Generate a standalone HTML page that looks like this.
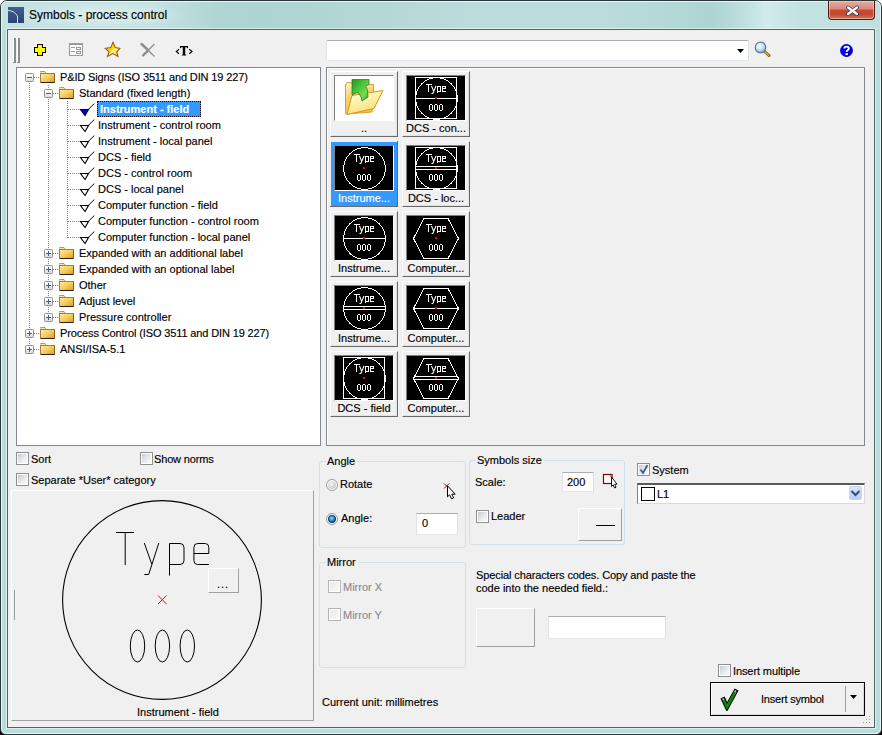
<!DOCTYPE html>
<html><head><meta charset="utf-8">
<style>
*{box-sizing:border-box}
html,body{margin:0;padding:0;width:882px;height:735px;overflow:hidden;background:#fff}
body{font-family:"Liberation Sans",sans-serif;font-size:11px;color:#000;position:relative}
.a{position:absolute}
.t{position:absolute;white-space:nowrap;line-height:13px;font-size:11px;color:#000;padding-top:1px;-webkit-text-stroke:0.15px currentColor}
#frame{left:0;top:0;width:882px;height:735px;border:1px solid #283838;border-radius:7px 7px 6px 6px;background:linear-gradient(180deg,rgba(0,0,0,0) 0,rgba(0,0,0,0) 29px,#b8dcdb 29px),linear-gradient(90deg,#c4e2e2 0px,#c6e3e3 150px,#b0d6d4 215px,#acd4d2 260px,#b4d8d6 380px,#bcdcdc 480px,#badcdc 600px,#b2d8d6 680px,#acd4d2 710px,#c0e0e0 745px,#d2eaea 765px,#c2e2e2 800px,#c0e0e0 882px)}
#frame2{left:1px;top:1px;width:880px;height:733px;border:1px solid rgba(255,255,255,.7);border-radius:6px 6px 5px 5px}
#client{left:7px;top:29px;width:868px;height:699px;border:1px solid #4e6466;background:#f0f0f0;box-shadow:0 0 0 1px rgba(255,255,255,.55)}
.panel{border:1px solid #828790}
.cb{position:absolute;width:13px;height:13px;border:1px solid #8e8f8f;background:linear-gradient(135deg,#c8ccd3 10%,#eceef0 60%,#fafafa);box-shadow:inset 0 0 0 1px #fff}
.gb{position:absolute;border:1px solid #d5dfe5;border-radius:3px}
.gbl{position:absolute;background:#f0f0f0;padding:1px 2px 0 1px;line-height:13px;-webkit-text-stroke:0.15px #000}
.inp{position:absolute;background:#fff;border:1px solid #abadb3;border-top-color:#abadb3;border-left-color:#e2e3ea;border-right-color:#dbdfe6;border-bottom-color:#e3e9ef}
</style></head><body>
<div class="a" style="left:0;top:725px;width:882px;height:10px;background:#000"></div>
<div id="frame" class="a"></div>
<div id="frame2" class="a"></div>
<div class="a" style="left:14px;top:2px;width:175px;height:26px;background:radial-gradient(ellipse 50% 50% at 50% 50%,rgba(255,255,255,0.45),rgba(255,255,255,0) 100%)"></div>
<!-- title icon -->
<div class="a" style="left:8px;top:7px;width:16px;height:16px;background:linear-gradient(180deg,#3f5f90,#2a4575)"></div>
<svg class="a" style="left:8px;top:7px" width="16" height="16"><path d="M0 3.5 Q6 3.5 9.5 9 L9.5 16" stroke="#d8dde8" stroke-width="1" fill="none"/></svg>
<div class="t" style="left:29px;top:7px;font-size:12px;line-height:14px;color:#000">Symbols - process control</div>
<!-- close button -->
<div class="a" style="left:828px;top:1px;width:47px;height:19px;border:1px solid #5a1a10;border-top:none;border-radius:0 0 4px 4px;background:linear-gradient(180deg,#e8a89c 0%,#d98a7c 45%,#c74a30 50%,#c24a32 75%,#d2775e 100%);box-shadow:inset 0 0 0 1px rgba(255,220,210,.5)"></div>
<svg class="a" style="left:845px;top:4px" width="15" height="13"><path d="M3 3.5 L12 10 M12 3.5 L3 10" stroke="#3a3a58" stroke-width="4" stroke-linecap="round"/><path d="M3 3.5 L12 10 M12 3.5 L3 10" stroke="#fff" stroke-width="2.2" stroke-linecap="round"/></svg>

<div id="client" class="a"></div>

<!-- toolbar -->
<svg class="a" style="left:13px;top:38px" width="8" height="26" shape-rendering="crispEdges"><rect x="0" y="0" width="1" height="25" fill="#fff"/><rect x="1" y="0" width="2" height="25" fill="#8a8a8a"/><rect x="0" y="24" width="3" height="1" fill="#8a8a8a"/><rect x="4" y="0" width="1" height="25" fill="#fff"/><rect x="5" y="0" width="2" height="25" fill="#8a8a8a"/><rect x="4" y="24" width="3" height="1" fill="#8a8a8a"/></svg>

<!-- yellow cross -->
<svg class="a" style="left:33px;top:43px" width="14" height="14" shape-rendering="crispEdges"><path d="M3 0 H10 V3 H13 V10 H10 V13 H3 V10 H0 V3 H3 Z" fill="#fff" opacity="0.8"/><rect x="4" y="1" width="6" height="12" fill="#000"/><rect x="1" y="4" width="12" height="6" fill="#000"/><rect x="5" y="2" width="4" height="10" fill="#ff0"/><rect x="2" y="5" width="10" height="4" fill="#ff0"/></svg>
<!-- properties icon -->
<svg class="a" style="left:69px;top:43px" width="14" height="13" shape-rendering="crispEdges"><rect x="0" y="0" width="14" height="13" fill="#9a9a9a"/><rect x="1" y="2" width="12" height="10" fill="#fbfbfb"/><rect x="2" y="4" width="4" height="1" fill="#9a9a9a"/><rect x="2" y="8" width="4" height="1" fill="#9a9a9a"/><rect x="7" y="4" width="5" height="3" fill="#9a9a9a"/><rect x="8" y="5" width="3" height="1" fill="#fbfbfb"/><rect x="7" y="8" width="5" height="3" fill="#9a9a9a"/><rect x="8" y="9" width="3" height="1" fill="#fbfbfb"/></svg>
<!-- star -->
<svg class="a" style="left:104px;top:41px" width="17" height="17"><defs><linearGradient id="sg" x1="0" y1="0" x2="1" y2="1"><stop offset="0" stop-color="#ffe060"/><stop offset="0.45" stop-color="#ffd000"/><stop offset="0.6" stop-color="#fff0a0"/><stop offset="1" stop-color="#f0b000"/></linearGradient></defs><path d="M9 1.3 L11.3 6.6 L16 7.4 L12.8 10.9 L14 15.4 L8.7 12.6 L3.6 15.4 L5 10.9 L1.2 7.4 L6.7 6.6 Z" fill="url(#sg)" stroke="#9a6000" stroke-width="1.1" stroke-linejoin="miter"/></svg>
<!-- X gray -->
<svg class="a" style="left:139px;top:42px" width="18" height="16"><path d="M2.5 2 L15.5 14.5" stroke="#8c8c8c" stroke-width="1.2"/><path d="M2.5 2 L8 7" stroke="#8c8c8c" stroke-width="2.4" stroke-linecap="round"/><path d="M15.5 2 L4 13.5" stroke="#8c8c8c" stroke-width="1.2"/><path d="M9 8.5 L4 13.5" stroke="#8c8c8c" stroke-width="2.4" stroke-linecap="round"/></svg>
<!-- <T> -->
<svg class="a" style="left:174px;top:44px" width="22" height="13"><path d="M5 5.3 L2.3 7.5 L5 9.7 M15.3 5.3 L18 7.5 L15.3 9.7" fill="none" stroke="#000" stroke-width="1.1"/><path d="M6 2 H14 V4.3 H13.2 L12.8 3.3 H11.2 V10.6 L12.2 10.8 V11.4 H7.8 V10.8 L8.8 10.6 V3.3 H7.2 L6.8 4.3 H6 Z" fill="#000"/></svg>
<!-- search combo -->
<div class="a" style="left:326px;top:40px;width:423px;height:21px;background:#fff;border:1px solid #abadb3;border-left-color:#e2e3ea;border-right-color:#dbdfe6;border-bottom-color:#e3e9ef;border-radius:2px"></div>
<svg class="a" style="left:737px;top:49px" width="8" height="5"><path d="M0 0 H7 L3.5 4 Z" fill="#000"/></svg>
<!-- magnifier -->
<svg class="a" style="left:754px;top:41px" width="17" height="16"><defs><radialGradient id="mg" cx="0.4" cy="0.35" r="0.7"><stop offset="0" stop-color="#ffffff"/><stop offset="0.6" stop-color="#bcd8ee"/><stop offset="1" stop-color="#6a98c0"/></radialGradient></defs><path d="M9.5 9.5 L15 14.5" stroke="#7a5a10" stroke-width="3" stroke-linecap="round"/><path d="M9.8 9.8 L14.6 14.2" stroke="#e0b040" stroke-width="1.4" stroke-linecap="round"/><circle cx="6.5" cy="6.5" r="5.3" fill="url(#mg)" stroke="#5d7f9c" stroke-width="1.2"/></svg>
<!-- help -->
<svg class="a" style="left:840px;top:44px" width="13" height="13"><defs><linearGradient id="hg" x1="0" y1="0" x2="1" y2="1"><stop offset="0.45" stop-color="#0000f4"/><stop offset="1" stop-color="#000090"/></linearGradient></defs><circle cx="6.5" cy="6.5" r="6.4" fill="url(#hg)"/><path d="M4.3 4.6 Q4.3 2.6 6.6 2.6 Q8.8 2.6 8.8 4.4 Q8.8 5.6 7.6 6.3 Q6.6 6.9 6.6 8" fill="none" stroke="#fff" stroke-width="1.9"/><rect x="5.5" y="9.2" width="2.4" height="1.9" fill="#fff"/></svg>
<!-- tree panel -->
<div class="a panel" style="left:16px;top:67px;width:305px;height:379px;background:#fff"></div>
<!-- grid panel -->
<div class="a panel" style="left:326px;top:67px;width:539px;height:379px;background:#f0f0f0;box-shadow:inset 1px 1px 0 #fff"></div>
<!--TREE-->
<svg class="a" style="left:17px;top:68px" width="303" height="377">
<defs>
<linearGradient id="bxg" x1="0" y1="0" x2="0" y2="1"><stop offset="0" stop-color="#ffffff"/><stop offset="0.5" stop-color="#f4f4f4"/><stop offset="1" stop-color="#d8d8d8"/></linearGradient>
<linearGradient id="fg" x1="0" y1="0" x2="1" y2="1"><stop offset="0" stop-color="#fff2b0"/><stop offset="0.55" stop-color="#f5c850"/><stop offset="1" stop-color="#d89a20"/></linearGradient>
<g id="fold"><path d="M0.5 1.5 L0.5 0.5 L5 0.5 L6.5 2.5 L6.5 2.5" fill="#f4e0a0" stroke="#b89860"/><rect x="0.5" y="2.5" width="14" height="9" fill="url(#fg)" stroke="#a08040"/><path d="M1 11.5 H15" stroke="#302010"/><path d="M14.5 3 V12" stroke="#806020"/></g>
<g id="chk0"><path d="M0.5 7.5 H8.5 L5 13.5 Z" fill="#fff" stroke="#000" stroke-width="1.1" stroke-linejoin="miter"/><path d="M8.2 7.6 L14.2 1.6" stroke="#000" stroke-width="1"/></g>
<g id="chk1"><path d="M0.5 7.5 H8.5 L5 13.5 Z" fill="#0000ff" stroke="#000" stroke-width="1.1" stroke-linejoin="miter"/><path d="M8.2 7.6 L14.2 1.6" stroke="#000" stroke-width="1"/></g>
</defs>
<g fill="#808080"><rect x="12" y="15" width="1" height="1"/><rect x="12" y="17" width="1" height="1"/><rect x="12" y="19" width="1" height="1"/><rect x="12" y="21" width="1" height="1"/><rect x="12" y="23" width="1" height="1"/><rect x="12" y="25" width="1" height="1"/><rect x="12" y="27" width="1" height="1"/><rect x="12" y="29" width="1" height="1"/><rect x="12" y="31" width="1" height="1"/><rect x="12" y="33" width="1" height="1"/><rect x="12" y="35" width="1" height="1"/><rect x="12" y="37" width="1" height="1"/><rect x="12" y="39" width="1" height="1"/><rect x="12" y="41" width="1" height="1"/><rect x="12" y="43" width="1" height="1"/><rect x="12" y="45" width="1" height="1"/><rect x="12" y="47" width="1" height="1"/><rect x="12" y="49" width="1" height="1"/><rect x="12" y="51" width="1" height="1"/><rect x="12" y="53" width="1" height="1"/><rect x="12" y="55" width="1" height="1"/><rect x="12" y="57" width="1" height="1"/><rect x="12" y="59" width="1" height="1"/><rect x="12" y="61" width="1" height="1"/><rect x="12" y="63" width="1" height="1"/><rect x="12" y="65" width="1" height="1"/><rect x="12" y="67" width="1" height="1"/><rect x="12" y="69" width="1" height="1"/><rect x="12" y="71" width="1" height="1"/><rect x="12" y="73" width="1" height="1"/><rect x="12" y="75" width="1" height="1"/><rect x="12" y="77" width="1" height="1"/><rect x="12" y="79" width="1" height="1"/><rect x="12" y="81" width="1" height="1"/><rect x="12" y="83" width="1" height="1"/><rect x="12" y="85" width="1" height="1"/><rect x="12" y="87" width="1" height="1"/><rect x="12" y="89" width="1" height="1"/><rect x="12" y="91" width="1" height="1"/><rect x="12" y="93" width="1" height="1"/><rect x="12" y="95" width="1" height="1"/><rect x="12" y="97" width="1" height="1"/><rect x="12" y="99" width="1" height="1"/><rect x="12" y="101" width="1" height="1"/><rect x="12" y="103" width="1" height="1"/><rect x="12" y="105" width="1" height="1"/><rect x="12" y="107" width="1" height="1"/><rect x="12" y="109" width="1" height="1"/><rect x="12" y="111" width="1" height="1"/><rect x="12" y="113" width="1" height="1"/><rect x="12" y="115" width="1" height="1"/><rect x="12" y="117" width="1" height="1"/><rect x="12" y="119" width="1" height="1"/><rect x="12" y="121" width="1" height="1"/><rect x="12" y="123" width="1" height="1"/><rect x="12" y="125" width="1" height="1"/><rect x="12" y="127" width="1" height="1"/><rect x="12" y="129" width="1" height="1"/><rect x="12" y="131" width="1" height="1"/><rect x="12" y="133" width="1" height="1"/><rect x="12" y="135" width="1" height="1"/><rect x="12" y="137" width="1" height="1"/><rect x="12" y="139" width="1" height="1"/><rect x="12" y="141" width="1" height="1"/><rect x="12" y="143" width="1" height="1"/><rect x="12" y="145" width="1" height="1"/><rect x="12" y="147" width="1" height="1"/><rect x="12" y="149" width="1" height="1"/><rect x="12" y="151" width="1" height="1"/><rect x="12" y="153" width="1" height="1"/><rect x="12" y="155" width="1" height="1"/><rect x="12" y="157" width="1" height="1"/><rect x="12" y="159" width="1" height="1"/><rect x="12" y="161" width="1" height="1"/><rect x="12" y="163" width="1" height="1"/><rect x="12" y="165" width="1" height="1"/><rect x="12" y="167" width="1" height="1"/><rect x="12" y="169" width="1" height="1"/><rect x="12" y="171" width="1" height="1"/><rect x="12" y="173" width="1" height="1"/><rect x="12" y="175" width="1" height="1"/><rect x="12" y="177" width="1" height="1"/><rect x="12" y="179" width="1" height="1"/><rect x="12" y="181" width="1" height="1"/><rect x="12" y="183" width="1" height="1"/><rect x="12" y="185" width="1" height="1"/><rect x="12" y="187" width="1" height="1"/><rect x="12" y="189" width="1" height="1"/><rect x="12" y="191" width="1" height="1"/><rect x="12" y="193" width="1" height="1"/><rect x="12" y="195" width="1" height="1"/><rect x="12" y="197" width="1" height="1"/><rect x="12" y="199" width="1" height="1"/><rect x="12" y="201" width="1" height="1"/><rect x="12" y="203" width="1" height="1"/><rect x="12" y="205" width="1" height="1"/><rect x="12" y="207" width="1" height="1"/><rect x="12" y="209" width="1" height="1"/><rect x="12" y="211" width="1" height="1"/><rect x="12" y="213" width="1" height="1"/><rect x="12" y="215" width="1" height="1"/><rect x="12" y="217" width="1" height="1"/><rect x="12" y="219" width="1" height="1"/><rect x="12" y="221" width="1" height="1"/><rect x="12" y="223" width="1" height="1"/><rect x="12" y="225" width="1" height="1"/><rect x="12" y="227" width="1" height="1"/><rect x="12" y="229" width="1" height="1"/><rect x="12" y="231" width="1" height="1"/><rect x="12" y="233" width="1" height="1"/><rect x="12" y="235" width="1" height="1"/><rect x="12" y="237" width="1" height="1"/><rect x="12" y="239" width="1" height="1"/><rect x="12" y="241" width="1" height="1"/><rect x="12" y="243" width="1" height="1"/><rect x="12" y="245" width="1" height="1"/><rect x="12" y="247" width="1" height="1"/><rect x="12" y="249" width="1" height="1"/><rect x="12" y="251" width="1" height="1"/><rect x="12" y="253" width="1" height="1"/><rect x="12" y="255" width="1" height="1"/><rect x="12" y="257" width="1" height="1"/><rect x="12" y="259" width="1" height="1"/><rect x="12" y="261" width="1" height="1"/><rect x="12" y="263" width="1" height="1"/><rect x="12" y="265" width="1" height="1"/><rect x="12" y="267" width="1" height="1"/><rect x="12" y="269" width="1" height="1"/><rect x="12" y="271" width="1" height="1"/><rect x="12" y="273" width="1" height="1"/><rect x="12" y="275" width="1" height="1"/><rect x="12" y="277" width="1" height="1"/><rect x="12" y="279" width="1" height="1"/><rect x="12" y="281" width="1" height="1"/><rect x="31" y="17" width="1" height="1"/><rect x="31" y="19" width="1" height="1"/><rect x="31" y="21" width="1" height="1"/><rect x="31" y="23" width="1" height="1"/><rect x="31" y="25" width="1" height="1"/><rect x="31" y="27" width="1" height="1"/><rect x="31" y="29" width="1" height="1"/><rect x="31" y="31" width="1" height="1"/><rect x="31" y="33" width="1" height="1"/><rect x="31" y="35" width="1" height="1"/><rect x="31" y="37" width="1" height="1"/><rect x="31" y="39" width="1" height="1"/><rect x="31" y="41" width="1" height="1"/><rect x="31" y="43" width="1" height="1"/><rect x="31" y="45" width="1" height="1"/><rect x="31" y="47" width="1" height="1"/><rect x="31" y="49" width="1" height="1"/><rect x="31" y="51" width="1" height="1"/><rect x="31" y="53" width="1" height="1"/><rect x="31" y="55" width="1" height="1"/><rect x="31" y="57" width="1" height="1"/><rect x="31" y="59" width="1" height="1"/><rect x="31" y="61" width="1" height="1"/><rect x="31" y="63" width="1" height="1"/><rect x="31" y="65" width="1" height="1"/><rect x="31" y="67" width="1" height="1"/><rect x="31" y="69" width="1" height="1"/><rect x="31" y="71" width="1" height="1"/><rect x="31" y="73" width="1" height="1"/><rect x="31" y="75" width="1" height="1"/><rect x="31" y="77" width="1" height="1"/><rect x="31" y="79" width="1" height="1"/><rect x="31" y="81" width="1" height="1"/><rect x="31" y="83" width="1" height="1"/><rect x="31" y="85" width="1" height="1"/><rect x="31" y="87" width="1" height="1"/><rect x="31" y="89" width="1" height="1"/><rect x="31" y="91" width="1" height="1"/><rect x="31" y="93" width="1" height="1"/><rect x="31" y="95" width="1" height="1"/><rect x="31" y="97" width="1" height="1"/><rect x="31" y="99" width="1" height="1"/><rect x="31" y="101" width="1" height="1"/><rect x="31" y="103" width="1" height="1"/><rect x="31" y="105" width="1" height="1"/><rect x="31" y="107" width="1" height="1"/><rect x="31" y="109" width="1" height="1"/><rect x="31" y="111" width="1" height="1"/><rect x="31" y="113" width="1" height="1"/><rect x="31" y="115" width="1" height="1"/><rect x="31" y="117" width="1" height="1"/><rect x="31" y="119" width="1" height="1"/><rect x="31" y="121" width="1" height="1"/><rect x="31" y="123" width="1" height="1"/><rect x="31" y="125" width="1" height="1"/><rect x="31" y="127" width="1" height="1"/><rect x="31" y="129" width="1" height="1"/><rect x="31" y="131" width="1" height="1"/><rect x="31" y="133" width="1" height="1"/><rect x="31" y="135" width="1" height="1"/><rect x="31" y="137" width="1" height="1"/><rect x="31" y="139" width="1" height="1"/><rect x="31" y="141" width="1" height="1"/><rect x="31" y="143" width="1" height="1"/><rect x="31" y="145" width="1" height="1"/><rect x="31" y="147" width="1" height="1"/><rect x="31" y="149" width="1" height="1"/><rect x="31" y="151" width="1" height="1"/><rect x="31" y="153" width="1" height="1"/><rect x="31" y="155" width="1" height="1"/><rect x="31" y="157" width="1" height="1"/><rect x="31" y="159" width="1" height="1"/><rect x="31" y="161" width="1" height="1"/><rect x="31" y="163" width="1" height="1"/><rect x="31" y="165" width="1" height="1"/><rect x="31" y="167" width="1" height="1"/><rect x="31" y="169" width="1" height="1"/><rect x="31" y="171" width="1" height="1"/><rect x="31" y="173" width="1" height="1"/><rect x="31" y="175" width="1" height="1"/><rect x="31" y="177" width="1" height="1"/><rect x="31" y="179" width="1" height="1"/><rect x="31" y="181" width="1" height="1"/><rect x="31" y="183" width="1" height="1"/><rect x="31" y="185" width="1" height="1"/><rect x="31" y="187" width="1" height="1"/><rect x="31" y="189" width="1" height="1"/><rect x="31" y="191" width="1" height="1"/><rect x="31" y="193" width="1" height="1"/><rect x="31" y="195" width="1" height="1"/><rect x="31" y="197" width="1" height="1"/><rect x="31" y="199" width="1" height="1"/><rect x="31" y="201" width="1" height="1"/><rect x="31" y="203" width="1" height="1"/><rect x="31" y="205" width="1" height="1"/><rect x="31" y="207" width="1" height="1"/><rect x="31" y="209" width="1" height="1"/><rect x="31" y="211" width="1" height="1"/><rect x="31" y="213" width="1" height="1"/><rect x="31" y="215" width="1" height="1"/><rect x="31" y="217" width="1" height="1"/><rect x="31" y="219" width="1" height="1"/><rect x="31" y="221" width="1" height="1"/><rect x="31" y="223" width="1" height="1"/><rect x="31" y="225" width="1" height="1"/><rect x="31" y="227" width="1" height="1"/><rect x="31" y="229" width="1" height="1"/><rect x="31" y="231" width="1" height="1"/><rect x="31" y="233" width="1" height="1"/><rect x="31" y="235" width="1" height="1"/><rect x="31" y="237" width="1" height="1"/><rect x="31" y="239" width="1" height="1"/><rect x="31" y="241" width="1" height="1"/><rect x="31" y="243" width="1" height="1"/><rect x="31" y="245" width="1" height="1"/><rect x="31" y="247" width="1" height="1"/><rect x="31" y="249" width="1" height="1"/><rect x="50" y="33" width="1" height="1"/><rect x="50" y="35" width="1" height="1"/><rect x="50" y="37" width="1" height="1"/><rect x="50" y="39" width="1" height="1"/><rect x="50" y="41" width="1" height="1"/><rect x="50" y="43" width="1" height="1"/><rect x="50" y="45" width="1" height="1"/><rect x="50" y="47" width="1" height="1"/><rect x="50" y="49" width="1" height="1"/><rect x="50" y="51" width="1" height="1"/><rect x="50" y="53" width="1" height="1"/><rect x="50" y="55" width="1" height="1"/><rect x="50" y="57" width="1" height="1"/><rect x="50" y="59" width="1" height="1"/><rect x="50" y="61" width="1" height="1"/><rect x="50" y="63" width="1" height="1"/><rect x="50" y="65" width="1" height="1"/><rect x="50" y="67" width="1" height="1"/><rect x="50" y="69" width="1" height="1"/><rect x="50" y="71" width="1" height="1"/><rect x="50" y="73" width="1" height="1"/><rect x="50" y="75" width="1" height="1"/><rect x="50" y="77" width="1" height="1"/><rect x="50" y="79" width="1" height="1"/><rect x="50" y="81" width="1" height="1"/><rect x="50" y="83" width="1" height="1"/><rect x="50" y="85" width="1" height="1"/><rect x="50" y="87" width="1" height="1"/><rect x="50" y="89" width="1" height="1"/><rect x="50" y="91" width="1" height="1"/><rect x="50" y="93" width="1" height="1"/><rect x="50" y="95" width="1" height="1"/><rect x="50" y="97" width="1" height="1"/><rect x="50" y="99" width="1" height="1"/><rect x="50" y="101" width="1" height="1"/><rect x="50" y="103" width="1" height="1"/><rect x="50" y="105" width="1" height="1"/><rect x="50" y="107" width="1" height="1"/><rect x="50" y="109" width="1" height="1"/><rect x="50" y="111" width="1" height="1"/><rect x="50" y="113" width="1" height="1"/><rect x="50" y="115" width="1" height="1"/><rect x="50" y="117" width="1" height="1"/><rect x="50" y="119" width="1" height="1"/><rect x="50" y="121" width="1" height="1"/><rect x="50" y="123" width="1" height="1"/><rect x="50" y="125" width="1" height="1"/><rect x="50" y="127" width="1" height="1"/><rect x="50" y="129" width="1" height="1"/><rect x="50" y="131" width="1" height="1"/><rect x="50" y="133" width="1" height="1"/><rect x="50" y="135" width="1" height="1"/><rect x="50" y="137" width="1" height="1"/><rect x="50" y="139" width="1" height="1"/><rect x="50" y="141" width="1" height="1"/><rect x="50" y="143" width="1" height="1"/><rect x="50" y="145" width="1" height="1"/><rect x="50" y="147" width="1" height="1"/><rect x="50" y="149" width="1" height="1"/><rect x="50" y="151" width="1" height="1"/><rect x="50" y="153" width="1" height="1"/><rect x="50" y="155" width="1" height="1"/><rect x="50" y="157" width="1" height="1"/><rect x="50" y="159" width="1" height="1"/><rect x="50" y="161" width="1" height="1"/><rect x="50" y="163" width="1" height="1"/><rect x="50" y="165" width="1" height="1"/><rect x="50" y="167" width="1" height="1"/><rect x="50" y="169" width="1" height="1"/><rect x="17" y="9" width="1" height="1"/><rect x="19" y="9" width="1" height="1"/><rect x="21" y="9" width="1" height="1"/><rect x="36" y="25" width="1" height="1"/><rect x="38" y="25" width="1" height="1"/><rect x="40" y="25" width="1" height="1"/><rect x="51" y="41" width="1" height="1"/><rect x="53" y="41" width="1" height="1"/><rect x="55" y="41" width="1" height="1"/><rect x="57" y="41" width="1" height="1"/><rect x="59" y="41" width="1" height="1"/><rect x="61" y="41" width="1" height="1"/><rect x="51" y="57" width="1" height="1"/><rect x="53" y="57" width="1" height="1"/><rect x="55" y="57" width="1" height="1"/><rect x="57" y="57" width="1" height="1"/><rect x="59" y="57" width="1" height="1"/><rect x="61" y="57" width="1" height="1"/><rect x="51" y="73" width="1" height="1"/><rect x="53" y="73" width="1" height="1"/><rect x="55" y="73" width="1" height="1"/><rect x="57" y="73" width="1" height="1"/><rect x="59" y="73" width="1" height="1"/><rect x="61" y="73" width="1" height="1"/><rect x="51" y="89" width="1" height="1"/><rect x="53" y="89" width="1" height="1"/><rect x="55" y="89" width="1" height="1"/><rect x="57" y="89" width="1" height="1"/><rect x="59" y="89" width="1" height="1"/><rect x="61" y="89" width="1" height="1"/><rect x="51" y="105" width="1" height="1"/><rect x="53" y="105" width="1" height="1"/><rect x="55" y="105" width="1" height="1"/><rect x="57" y="105" width="1" height="1"/><rect x="59" y="105" width="1" height="1"/><rect x="61" y="105" width="1" height="1"/><rect x="51" y="121" width="1" height="1"/><rect x="53" y="121" width="1" height="1"/><rect x="55" y="121" width="1" height="1"/><rect x="57" y="121" width="1" height="1"/><rect x="59" y="121" width="1" height="1"/><rect x="61" y="121" width="1" height="1"/><rect x="51" y="137" width="1" height="1"/><rect x="53" y="137" width="1" height="1"/><rect x="55" y="137" width="1" height="1"/><rect x="57" y="137" width="1" height="1"/><rect x="59" y="137" width="1" height="1"/><rect x="61" y="137" width="1" height="1"/><rect x="51" y="153" width="1" height="1"/><rect x="53" y="153" width="1" height="1"/><rect x="55" y="153" width="1" height="1"/><rect x="57" y="153" width="1" height="1"/><rect x="59" y="153" width="1" height="1"/><rect x="61" y="153" width="1" height="1"/><rect x="51" y="169" width="1" height="1"/><rect x="53" y="169" width="1" height="1"/><rect x="55" y="169" width="1" height="1"/><rect x="57" y="169" width="1" height="1"/><rect x="59" y="169" width="1" height="1"/><rect x="61" y="169" width="1" height="1"/><rect x="36" y="185" width="1" height="1"/><rect x="38" y="185" width="1" height="1"/><rect x="40" y="185" width="1" height="1"/><rect x="36" y="201" width="1" height="1"/><rect x="38" y="201" width="1" height="1"/><rect x="40" y="201" width="1" height="1"/><rect x="36" y="217" width="1" height="1"/><rect x="38" y="217" width="1" height="1"/><rect x="40" y="217" width="1" height="1"/><rect x="36" y="233" width="1" height="1"/><rect x="38" y="233" width="1" height="1"/><rect x="40" y="233" width="1" height="1"/><rect x="36" y="249" width="1" height="1"/><rect x="38" y="249" width="1" height="1"/><rect x="40" y="249" width="1" height="1"/><rect x="17" y="265" width="1" height="1"/><rect x="19" y="265" width="1" height="1"/><rect x="21" y="265" width="1" height="1"/><rect x="17" y="281" width="1" height="1"/><rect x="19" y="281" width="1" height="1"/><rect x="21" y="281" width="1" height="1"/></g>
<rect x="8.5" y="5.5" width="8" height="8" rx="1" fill="url(#bxg)" stroke="#8f8f8f"/><rect x="10" y="9" width="5" height="1" fill="#3a5aa8"/><use href="#fold" x="23" y="3"/><rect x="27.5" y="21.5" width="8" height="8" rx="1" fill="url(#bxg)" stroke="#8f8f8f"/><rect x="29" y="25" width="5" height="1" fill="#3a5aa8"/><use href="#fold" x="42" y="19"/><use href="#chk1" x="63" y="34"/><use href="#chk0" x="63" y="50"/><use href="#chk0" x="63" y="66"/><use href="#chk0" x="63" y="82"/><use href="#chk0" x="63" y="98"/><use href="#chk0" x="63" y="114"/><use href="#chk0" x="63" y="130"/><use href="#chk0" x="63" y="146"/><use href="#chk0" x="63" y="162"/><rect x="27.5" y="181.5" width="8" height="8" rx="1" fill="url(#bxg)" stroke="#8f8f8f"/><rect x="29" y="185" width="5" height="1" fill="#3a5aa8"/><rect x="31" y="183" width="1" height="5" fill="#3a5aa8"/><use href="#fold" x="42" y="179"/><rect x="27.5" y="197.5" width="8" height="8" rx="1" fill="url(#bxg)" stroke="#8f8f8f"/><rect x="29" y="201" width="5" height="1" fill="#3a5aa8"/><rect x="31" y="199" width="1" height="5" fill="#3a5aa8"/><use href="#fold" x="42" y="195"/><rect x="27.5" y="213.5" width="8" height="8" rx="1" fill="url(#bxg)" stroke="#8f8f8f"/><rect x="29" y="217" width="5" height="1" fill="#3a5aa8"/><rect x="31" y="215" width="1" height="5" fill="#3a5aa8"/><use href="#fold" x="42" y="211"/><rect x="27.5" y="229.5" width="8" height="8" rx="1" fill="url(#bxg)" stroke="#8f8f8f"/><rect x="29" y="233" width="5" height="1" fill="#3a5aa8"/><rect x="31" y="231" width="1" height="5" fill="#3a5aa8"/><use href="#fold" x="42" y="227"/><rect x="27.5" y="245.5" width="8" height="8" rx="1" fill="url(#bxg)" stroke="#8f8f8f"/><rect x="29" y="249" width="5" height="1" fill="#3a5aa8"/><rect x="31" y="247" width="1" height="5" fill="#3a5aa8"/><use href="#fold" x="42" y="243"/><rect x="8.5" y="261.5" width="8" height="8" rx="1" fill="url(#bxg)" stroke="#8f8f8f"/><rect x="10" y="265" width="5" height="1" fill="#3a5aa8"/><rect x="12" y="263" width="1" height="5" fill="#3a5aa8"/><use href="#fold" x="23" y="259"/><rect x="8.5" y="277.5" width="8" height="8" rx="1" fill="url(#bxg)" stroke="#8f8f8f"/><rect x="10" y="281" width="5" height="1" fill="#3a5aa8"/><rect x="12" y="279" width="1" height="5" fill="#3a5aa8"/><use href="#fold" x="23" y="275"/>
</svg>
<div class="t" style="left:60px;top:70px;letter-spacing:-0.13px">P&amp;ID Signs (ISO 3511 and DIN 19 227)</div>
<div class="t" style="left:79px;top:86px">Standard (fixed length)</div>
<div class="a" style="left:97px;top:101px;width:104px;height:16px;background:#3399ff;outline:1px dotted #000;outline-offset:-1px"></div>
<div class="t" style="left:100px;top:102px;font-weight:bold;color:#fff">Instrument - field</div>
<div class="t" style="left:98px;top:118px">Instrument - control room</div>
<div class="t" style="left:98px;top:134px">Instrument - local panel</div>
<div class="t" style="left:98px;top:150px">DCS - field</div>
<div class="t" style="left:98px;top:166px">DCS - control room</div>
<div class="t" style="left:98px;top:182px">DCS - local panel</div>
<div class="t" style="left:98px;top:198px">Computer function - field</div>
<div class="t" style="left:98px;top:214px">Computer function - control room</div>
<div class="t" style="left:98px;top:230px">Computer function - local panel</div>
<div class="t" style="left:79px;top:246px">Expanded with an additional label</div>
<div class="t" style="left:79px;top:262px">Expanded with an optional label</div>
<div class="t" style="left:79px;top:278px">Other</div>
<div class="t" style="left:79px;top:294px">Adjust level</div>
<div class="t" style="left:79px;top:310px">Pressure controller</div>
<div class="t" style="left:60px;top:326px;letter-spacing:-0.13px">Process Control (ISO 3511 and DIN 19 227)</div>
<div class="t" style="left:60px;top:342px">ANSI/ISA-5.1</div>
<!--/TREE-->
<!--GRID-->
<svg width="0" height="0" style="position:absolute"><defs>
<g id="tp" fill="none" stroke="#fff" stroke-width="1" shape-rendering="crispEdges">
<path d="M19 8.5 H25 M21.5 9 V16"/>
<path d="M24.5 10 L26.8 15.6 M29 10 L25.8 17.5 H24.5" shape-rendering="geometricPrecision" stroke-width="1.1"/>
<path d="M30.5 10 V17 M30.5 10.5 H33.5 V15.5 H30.5"/>
<path d="M38.5 15.5 H35.5 V10.5 H38.5 V12.5 H35.5"/>
<path d="M22.5 29 V34 M25.5 29 V34 M23 28.5 H25 M23 34.5 H25"/>
<path d="M27.5 29 V34 M30.5 29 V34 M28 28.5 H30 M28 34.5 H30"/>
<path d="M32.5 29 V34 M35.5 29 V34 M33 28.5 H35 M33 34.5 H35"/>
</g>
</defs></svg>
<div class="a" style="left:330px;top:71px;width:68px;height:66px;border:1px solid;border-color:#fff #696969 #696969 #fff;box-shadow:inset -1px -1px 0 #e3e3e3"></div>
<div class="a" style="left:334px;top:75px;width:60px;height:46px;border:1px solid;border-color:#808080 #fff #fff #808080;background:#fff"></div>
<svg class="a" style="left:342px;top:76px" width="44" height="42"><defs><linearGradient id="fu1" x1="0" y1="0" x2="0.3" y2="1"><stop offset="0" stop-color="#fff6c0"/><stop offset="0.5" stop-color="#f8d070"/><stop offset="1" stop-color="#f0c050"/></linearGradient><linearGradient id="fu2" x1="0" y1="0" x2="0.6" y2="1"><stop offset="0" stop-color="#fffde8"/><stop offset="0.5" stop-color="#fff2a8"/><stop offset="1" stop-color="#f8d870"/></linearGradient><linearGradient id="ar" x1="0" y1="0" x2="1" y2="1"><stop offset="0" stop-color="#1a9a1a"/><stop offset="0.7" stop-color="#70e050"/><stop offset="1" stop-color="#308a30"/></linearGradient></defs>
<path d="M3.5 9 L5 6.5 L31.5 8.5 L31.5 16 L30 36 L4 38 L3.5 36 Z" fill="url(#fu1)" stroke="#e0a020" stroke-width="1"/>
<path d="M10 19.5 L41 14.5 L32 32.5 L5 38.5 Z" fill="url(#fu2)" stroke="#d89818" stroke-width="1"/>
<path d="M10 3.5 H27 V8.5 L23.5 10 L25.5 14 L26 21 L20 25 L19 21 L17 17.5 L15 16.5 L10 19 Z" fill="url(#ar)" stroke="#2c6a2c" stroke-width="0.7"/>
</svg>
<div class="t" style="left:330px;top:121px;width:68px;text-align:center;color:#000">..</div>
<div class="a" style="left:402px;top:71px;width:68px;height:66px;border:1px solid;border-color:#fff #696969 #696969 #fff;box-shadow:inset -1px -1px 0 #e3e3e3"></div>
<div class="a" style="left:406px;top:75px;width:60px;height:46px;border:1px solid;border-color:#808080 #fff #fff #808080;background:#000"></div>
<svg class="a" style="left:407px;top:76px" width="58" height="44" shape-rendering="crispEdges"><circle cx="29.5" cy="22.5" r="20.8" fill="none" stroke="#fff" stroke-width="1"/><rect x="8.5" y="1.5" width="41" height="41" fill="none" stroke="#fff" stroke-width="1"/><path d="M8.5 22.5 H49.5" fill="none" stroke="#fff" stroke-width="1"/><use href="#tp"/><rect x="28" y="21" width="2" height="2" fill="#f00"/></svg>
<div class="t" style="left:402px;top:121px;width:68px;text-align:center;color:#000">DCS - con...</div>
<div class="a" style="left:330px;top:141px;width:68px;height:66px;border-right:1px solid #696969;border-bottom:1px solid #696969;background:#f0f0f0"></div>
<div class="a" style="left:331px;top:142px;width:66px;height:64px;background:#3399ff"></div>
<div class="a" style="left:334px;top:145px;width:60px;height:46px;border:1px solid;border-color:#808080 #fff #fff #808080;background:#000"></div>
<svg class="a" style="left:335px;top:146px" width="58" height="44" shape-rendering="crispEdges"><circle cx="29.5" cy="22.5" r="20.8" fill="none" stroke="#fff" stroke-width="1"/><use href="#tp"/><rect x="28" y="21" width="2" height="2" fill="#f00"/></svg>
<div class="t" style="left:330px;top:191px;width:68px;text-align:center;color:#fff">Instrume...</div>
<div class="a" style="left:402px;top:141px;width:68px;height:66px;border:1px solid;border-color:#fff #696969 #696969 #fff;box-shadow:inset -1px -1px 0 #e3e3e3"></div>
<div class="a" style="left:406px;top:145px;width:60px;height:46px;border:1px solid;border-color:#808080 #fff #fff #808080;background:#000"></div>
<svg class="a" style="left:407px;top:146px" width="58" height="44" shape-rendering="crispEdges"><circle cx="29.5" cy="22.5" r="20.8" fill="none" stroke="#fff" stroke-width="1"/><rect x="8.5" y="1.5" width="41" height="41" fill="none" stroke="#fff" stroke-width="1"/><path d="M8.5 20.5 H49.5 M8.5 23.5 H49.5" fill="none" stroke="#fff" stroke-width="1"/><use href="#tp"/><rect x="28" y="21" width="2" height="2" fill="#f00"/></svg>
<div class="t" style="left:402px;top:191px;width:68px;text-align:center;color:#000">DCS - loc...</div>
<div class="a" style="left:330px;top:211px;width:68px;height:66px;border:1px solid;border-color:#fff #696969 #696969 #fff;box-shadow:inset -1px -1px 0 #e3e3e3"></div>
<div class="a" style="left:334px;top:215px;width:60px;height:46px;border:1px solid;border-color:#808080 #fff #fff #808080;background:#000"></div>
<svg class="a" style="left:335px;top:216px" width="58" height="44" shape-rendering="crispEdges"><circle cx="29.5" cy="22.5" r="20.8" fill="none" stroke="#fff" stroke-width="1"/><path d="M8.5 22.5 H50.5" fill="none" stroke="#fff" stroke-width="1"/><use href="#tp"/><rect x="28" y="21" width="2" height="2" fill="#f00"/></svg>
<div class="t" style="left:330px;top:261px;width:68px;text-align:center;color:#000">Instrume...</div>
<div class="a" style="left:402px;top:211px;width:68px;height:66px;border:1px solid;border-color:#fff #696969 #696969 #fff;box-shadow:inset -1px -1px 0 #e3e3e3"></div>
<div class="a" style="left:406px;top:215px;width:60px;height:46px;border:1px solid;border-color:#808080 #fff #fff #808080;background:#000"></div>
<svg class="a" style="left:407px;top:216px" width="58" height="44" shape-rendering="crispEdges"><path d="M6.5 22.5 L17 2.5 H41 L51.5 22.5 L41 42.5 H17 Z" fill="none" stroke="#fff" stroke-width="1"/><use href="#tp"/><rect x="28" y="21" width="2" height="2" fill="#f00"/></svg>
<div class="t" style="left:402px;top:261px;width:68px;text-align:center;color:#000">Computer...</div>
<div class="a" style="left:330px;top:281px;width:68px;height:66px;border:1px solid;border-color:#fff #696969 #696969 #fff;box-shadow:inset -1px -1px 0 #e3e3e3"></div>
<div class="a" style="left:334px;top:285px;width:60px;height:46px;border:1px solid;border-color:#808080 #fff #fff #808080;background:#000"></div>
<svg class="a" style="left:335px;top:286px" width="58" height="44" shape-rendering="crispEdges"><circle cx="29.5" cy="22.5" r="20.8" fill="none" stroke="#fff" stroke-width="1"/><path d="M9 20.5 H50 M9 23.5 H50" fill="none" stroke="#fff" stroke-width="1"/><use href="#tp"/><rect x="28" y="21" width="2" height="2" fill="#f00"/></svg>
<div class="t" style="left:330px;top:331px;width:68px;text-align:center;color:#000">Instrume...</div>
<div class="a" style="left:402px;top:281px;width:68px;height:66px;border:1px solid;border-color:#fff #696969 #696969 #fff;box-shadow:inset -1px -1px 0 #e3e3e3"></div>
<div class="a" style="left:406px;top:285px;width:60px;height:46px;border:1px solid;border-color:#808080 #fff #fff #808080;background:#000"></div>
<svg class="a" style="left:407px;top:286px" width="58" height="44" shape-rendering="crispEdges"><path d="M6.5 22.5 L17 2.5 H41 L51.5 22.5 L41 42.5 H17 Z" fill="none" stroke="#fff" stroke-width="1"/><path d="M6.5 22.5 H51.5" fill="none" stroke="#fff" stroke-width="1"/><use href="#tp"/><rect x="28" y="21" width="2" height="2" fill="#f00"/></svg>
<div class="t" style="left:402px;top:331px;width:68px;text-align:center;color:#000">Computer...</div>
<div class="a" style="left:330px;top:351px;width:68px;height:66px;border:1px solid;border-color:#fff #696969 #696969 #fff;box-shadow:inset -1px -1px 0 #e3e3e3"></div>
<div class="a" style="left:334px;top:355px;width:60px;height:46px;border:1px solid;border-color:#808080 #fff #fff #808080;background:#000"></div>
<svg class="a" style="left:335px;top:356px" width="58" height="44" shape-rendering="crispEdges"><circle cx="29.5" cy="22.5" r="20.8" fill="none" stroke="#fff" stroke-width="1"/><rect x="8.5" y="1.5" width="41" height="41" fill="none" stroke="#fff" stroke-width="1"/><use href="#tp"/><rect x="28" y="21" width="2" height="2" fill="#f00"/></svg>
<div class="t" style="left:330px;top:401px;width:68px;text-align:center;color:#000">DCS - field</div>
<div class="a" style="left:402px;top:351px;width:68px;height:66px;border:1px solid;border-color:#fff #696969 #696969 #fff;box-shadow:inset -1px -1px 0 #e3e3e3"></div>
<div class="a" style="left:406px;top:355px;width:60px;height:46px;border:1px solid;border-color:#808080 #fff #fff #808080;background:#000"></div>
<svg class="a" style="left:407px;top:356px" width="58" height="44" shape-rendering="crispEdges"><path d="M6.5 22.5 L17 2.5 H41 L51.5 22.5 L41 42.5 H17 Z" fill="none" stroke="#fff" stroke-width="1"/><path d="M7.5 20.5 H51 M7.5 23.5 H51" fill="none" stroke="#fff" stroke-width="1"/><use href="#tp"/><rect x="28" y="21" width="2" height="2" fill="#f00"/></svg>
<div class="t" style="left:402px;top:401px;width:68px;text-align:center;color:#000">Computer...</div>
<!--/GRID-->
<!--BOTTOM-->
<!-- checkboxes under tree -->
<div class="cb" style="left:16px;top:452px"></div>
<div class="t" style="left:31px;top:452px">Sort</div>
<div class="cb" style="left:140px;top:452px"></div>
<div class="t" style="left:154px;top:452px;letter-spacing:-0.15px">Show norms</div>
<div class="cb" style="left:16px;top:473px"></div>
<div class="t" style="left:31px;top:473px">Separate *User* category</div>
<!-- preview panel -->
<div class="a" style="left:11px;top:490px;width:303px;height:231px;border:1px solid;border-color:#fff #a0a0a0 #a0a0a0 #fff"></div>
<div class="a" style="left:14px;top:590px;width:1px;height:30px;background:#a0a0a0"></div>
<svg class="a" style="left:55px;top:495px" width="220" height="210">
<circle cx="107" cy="105" r="99.4" fill="none" stroke="#000" stroke-width="1.1"/>
<g fill="none" stroke="#000" stroke-width="1">
<path d="M61 37.5 H79 M70.2 37.5 V70"/>
<path d="M89.3 48 L96.7 69 M103.8 48 L93.7 79.5 H89.3"/>
<path d="M114.5 80.6 V48.5 H125 Q129 48.5 129 52.5 V65.5 Q129 69.5 125 69.5 H114.5"/>
<path d="M153.8 69.5 H142.5 Q138.9 69.5 138.9 65.5 V52.5 Q138.9 48.5 142.5 48.5 H150.3 Q153.8 48.5 153.8 52.5 V58.5 H138.9"/>
<ellipse cx="82.5" cy="151" rx="7.2" ry="16"/>
<ellipse cx="107.4" cy="151" rx="7.2" ry="16"/>
<ellipse cx="132.3" cy="151" rx="7.2" ry="16"/>
</g>
<path d="M103 100.5 L111.5 109 M111.5 100.5 L103 109" stroke="#f00" stroke-width="1"/>
</svg>
<div class="a" style="left:208px;top:568px;width:31px;height:25px;border:1px solid;border-color:#fff #a0a0a0 #a0a0a0 #fff;background:#f0f0f0"></div>
<div class="t" style="left:208px;top:577px;width:30px;text-align:center;color:#000;letter-spacing:1px">...</div>
<div class="t" style="left:137px;top:705px">Instrument - field</div>

<!-- Angle group -->
<div class="gb" style="left:319px;top:461px;width:147px;height:87px"></div>
<div class="gbl" style="left:326px;top:454px">Angle</div>
<svg class="a" style="left:326px;top:479px" width="12" height="12"><defs><radialGradient id="rg0" cx="0.4" cy="0.35" r="0.7"><stop offset="0" stop-color="#f4f6f8"/><stop offset="1" stop-color="#c4c8cc"/></radialGradient></defs><circle cx="6" cy="6" r="5.5" fill="#fff" stroke="#979797" stroke-width="1"/><circle cx="6" cy="6" r="4" fill="url(#rg0)"/></svg>
<div class="t" style="left:340px;top:477px">Rotate</div>
<svg class="a" style="left:326px;top:513px" width="12" height="12"><defs><radialGradient id="rg1" cx="0.45" cy="0.4" r="0.6"><stop offset="0" stop-color="#8adcff"/><stop offset="0.6" stop-color="#1a8ad0"/><stop offset="1" stop-color="#0a3a60"/></radialGradient></defs><circle cx="6" cy="6" r="5.5" fill="#fff" stroke="#979797" stroke-width="1"/><circle cx="6" cy="6" r="3.7" fill="url(#rg1)" stroke="#0e2c4a" stroke-width="0.8"/></svg>
<div class="t" style="left:341px;top:511px">Angle:</div>
<div class="inp" style="left:416px;top:513px;width:42px;height:22px"></div>
<div class="t" style="left:422px;top:516px">0</div>
<!-- cursor with red x -->
<svg class="a" style="left:440px;top:480px" width="18" height="20"><path d="M4 3.5 L9 8.5 M9 3.5 L4 8.5" stroke="#a01818" stroke-width="1"/><path d="M7.5 5.8 V16.8 L9.6 14.8 L11.6 18.8 L13.6 17.8 L11.8 14.2 H15.2 Z" fill="#fff" stroke="#000" stroke-width="1" stroke-linejoin="miter"/></svg>

<!-- Symbols size group -->
<div class="gb" style="left:469px;top:460px;width:156px;height:85px"></div>
<div class="gbl" style="left:476px;top:453px">Symbols size</div>
<div class="t" style="left:475px;top:475px">Scale:</div>
<div class="inp" style="left:562px;top:472px;width:32px;height:20px"></div>
<div class="t" style="left:567px;top:475px">200</div>
<svg class="a" style="left:600px;top:472px" width="20" height="18"><rect x="3.5" y="2.5" width="8.5" height="9" fill="#fff" stroke="#8b0000" stroke-width="1.2"/><path d="M9.8 3.5 L12.5 5.5" stroke="#c02020" stroke-width="0.9"/><path d="M11.5 5 V14.5 L13.2 12.8 L14.5 16 L16 15.3 L14.7 12.2 H17 Z" fill="#fff" stroke="#000" stroke-width="0.9" stroke-linejoin="miter"/></svg>
<div class="cb" style="left:476px;top:510px"></div>
<div class="t" style="left:491px;top:509px">Leader</div>
<div class="a" style="left:578px;top:508px;width:44px;height:33px;border:1px solid;border-color:#fff #a0a0a0 #a0a0a0 #fff"></div>
<div class="a" style="left:596px;top:525px;width:19px;height:1px;background:#000"></div>

<!-- System -->
<div class="cb" style="left:637px;top:463px"></div>
<svg class="a" style="left:639px;top:464px" width="10" height="11"><path d="M1.5 5.5 L4 9 L8.5 1" fill="none" stroke="#3c5ea8" stroke-width="1.8"/></svg>
<div class="t" style="left:652px;top:463px">System</div>
<div class="a" style="left:637px;top:483px;width:228px;height:21px;background:#fff;border:1px solid #dadada;border-top:2px solid #5a5a5a;border-left:1px solid #808080"></div>
<div class="a" style="left:641px;top:487px;width:14px;height:14px;border:1px solid #000;background:#fff"></div>
<div class="t" style="left:657px;top:487px">L1</div>
<div class="a" style="left:849px;top:486px;width:13px;height:14px;border-radius:2px;background:linear-gradient(180deg,#d8e4fa,#b6cdf8);border:1px solid #c6d6f2"></div>
<svg class="a" style="left:850px;top:489px" width="11" height="8"><path d="M1.5 2 L5.5 6 L9.5 2" fill="none" stroke="#364c76" stroke-width="2"/></svg>

<!-- Mirror group -->
<div class="gb" style="left:319px;top:562px;width:147px;height:106px"></div>
<div class="gbl" style="left:326px;top:555px">Mirror</div>
<div class="cb" style="left:328px;top:580px;border-color:#b4b4b4;background:linear-gradient(135deg,#e8e8e8,#fafafa)"></div>
<div class="t" style="left:343px;top:580px;color:#8d8d8d">Mirror X</div>
<div class="cb" style="left:328px;top:608px;border-color:#b4b4b4;background:linear-gradient(135deg,#e8e8e8,#fafafa)"></div>
<div class="t" style="left:343px;top:608px;color:#8d8d8d">Mirror Y</div>

<!-- Special chars -->
<div class="t" style="left:476px;top:568px;letter-spacing:-0.11px">Special characters codes. Copy and paste the</div>
<div class="t" style="left:476px;top:581px">code into the needed field.:</div>
<div class="a" style="left:476px;top:608px;width:59px;height:39px;border:1px solid;border-color:#fff #a0a0a0 #a0a0a0 #fff"></div>
<div class="inp" style="left:548px;top:616px;width:118px;height:23px"></div>

<div class="t" style="left:322px;top:695px">Current unit: millimetres</div>

<!-- Insert multiple -->
<div class="cb" style="left:718px;top:664px"></div>
<div class="t" style="left:733px;top:664px;letter-spacing:-0.1px">Insert multiple</div>
<!-- Insert symbol button -->
<div class="a" style="left:710px;top:682px;width:155px;height:34px;border:1px solid #000;background:#f0f0f0;box-shadow:inset 1px 1px 0 #fff,inset -1px -1px 0 #d8d8d8"></div>
<div class="a" style="left:845px;top:686px;width:1px;height:26px;background:#a0a0a0"></div>
<svg class="a" style="left:850px;top:695px" width="8" height="5"><path d="M0 0 H7 L3.5 4 Z" fill="#000"/></svg>
<svg class="a" style="left:718px;top:687px" width="22" height="24"><path d="M5.5 12.5 L9 20 L17.5 4.5" fill="none" stroke="#000" stroke-width="4.6" stroke-linecap="square" stroke-linejoin="miter"/><path d="M5.5 12.5 L9 20 L17.5 4.5" fill="none" stroke="#0a8a0a" stroke-width="2.6" stroke-linecap="butt" stroke-linejoin="miter"/><path d="M4.6 11.2 L5.8 13" stroke="#b0b0b0" stroke-width="1.6"/><path d="M16.5 5.2 L18 3.2" stroke="#b0b0b0" stroke-width="1.6"/></svg>
<div class="t" style="left:761px;top:692px;letter-spacing:-0.2px">Insert symbol</div>
<!-- grip -->
<svg class="a" style="left:863px;top:716px" width="10" height="10"><g fill="#a0a0a0"><rect x="6" y="0" width="1" height="1"/><rect x="3" y="3" width="1" height="1"/><rect x="6" y="3" width="1" height="1"/><rect x="0" y="6" width="1" height="1"/><rect x="3" y="6" width="1" height="1"/><rect x="6" y="6" width="1" height="1"/></g></svg>

<!--/BOTTOM-->
</body></html>
